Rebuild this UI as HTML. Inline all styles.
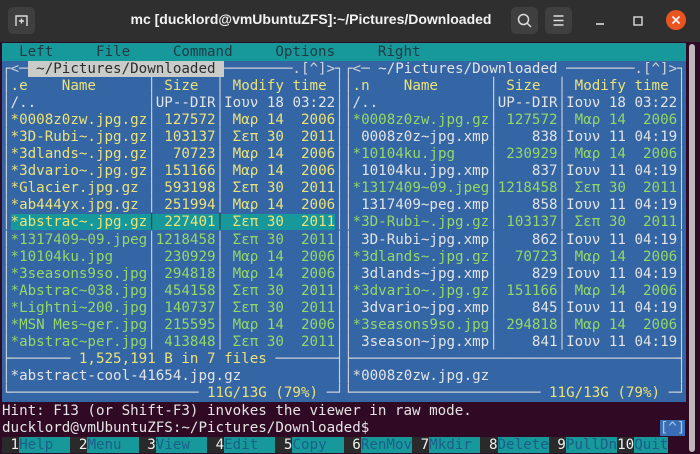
<!DOCTYPE html>
<html><head><meta charset="utf-8"><style>
*{margin:0;padding:0;box-sizing:border-box}
body{width:700px;height:454px;overflow:hidden;background:#300a24;position:relative;font-family:"DejaVu Sans Mono",monospace}
#tb{position:absolute;left:0;top:0;width:700px;height:42px;background:#2f2f2f}
#title{position:absolute;left:0;width:622px;text-align:center;top:11px;color:#f2f2f2;font:bold 14px "Liberation Sans",sans-serif}
.btn{position:absolute;top:7px;width:27px;height:27px;background:#3f3f3f;border-radius:5px}
.ln{height:17.1px;line-height:17.1px;white-space:pre;font-size:14.2px;font-family:"DejaVu Sans Mono",monospace}
#menu{position:absolute;left:2px;top:42.5px;width:684px;height:18.1px;padding-top:1px;background:#17989a;color:#1f3c44}
.pn{position:absolute;top:60.6px;width:342px;background:#3465a4;color:#d0d4d8}
#lp{left:2px}#rp{left:344px}
.y{color:#ece27a}.g{color:#94d868}.w{color:#e2e4e6}
.sel{background:#17989a}
.hl{background:#c9ccc8;color:#2a2e30}
#bot{position:absolute;left:2px;top:402.6px;width:684px;color:#e4e4e4}
.t{background:#17989a;color:#1b5f8a}
.n{color:#f0f0f0;background:#2a2a2a}
.up{background:#3a6eb4;color:#a8c8ec}
#sb{position:absolute;left:689px;top:44px;width:6px;height:408px;background:#bdb8bb;border-radius:3px}
</style></head><body>
<div id="tb">
<div class="btn" style="left:8px"><svg width="27" height="27" viewBox="0 0 27 27"><path d="M8 19V9h11v10" fill="none" stroke="#ddd" stroke-width="1.4"/><path d="M13.5 11.5v5M11 14h5" stroke="#ddd" stroke-width="1.4"/></svg></div>
<div id="title">mc [ducklord@vmUbuntuZFS]:~/Pictures/Downloaded</div>
<div class="btn" style="left:511px"><svg width="27" height="27" viewBox="0 0 27 27"><circle cx="12.5" cy="12.5" r="5" fill="none" stroke="#ddd" stroke-width="1.5"/><path d="M16 16l4 4" stroke="#ddd" stroke-width="1.5"/></svg></div>
<div class="btn" style="left:545px"><svg width="27" height="27" viewBox="0 0 27 27"><path d="M8.5 9h10M8.5 13.5h10M8.5 18h10" stroke="#ddd" stroke-width="1.4"/></svg></div>
<svg style="position:absolute;left:590px;top:8px" width="100" height="26" viewBox="0 0 100 26"><path d="M6 16h8" stroke="#ddd" stroke-width="1.6"/><rect x="44" y="9" width="8" height="8" fill="none" stroke="#ddd" stroke-width="1.4"/><circle cx="86" cy="12" r="10" fill="#e95420"/><path d="M82.5 8.5l7 7M89.5 8.5l-7 7" stroke="#fff" stroke-width="1.6"/></svg>
</div>
<div id="sb"></div>
<div id="menu" class="ln">  Left     File     Command     Options     Right</div>
<div id="lp" class="pn">
<div class="ln">┌&lt;─<span class="hl"> ~/Pictures/Downloaded </span>────────.[^]&gt;┐</div>
<div class="ln">│<span class="y">.e    Name      </span>│<span class="y"> Size  </span>│<span class="y"> Modify time </span>│</div>
<div class="ln">│<span class="w">/..             </span>│<span class="w">UP--DIR</span>│<span class="w">Ιουν 18 03:22</span>│</div>
<div class="ln">│<span class="y">*0008z0zw.jpg.gz</span>│<span class="y"> 127572</span>│<span class="y"> Μαρ 14  2006</span>│</div>
<div class="ln">│<span class="y">*3D-Rubi~.jpg.gz</span>│<span class="y"> 103137</span>│<span class="y"> Σεπ 30  2011</span>│</div>
<div class="ln">│<span class="y">*3dlands~.jpg.gz</span>│<span class="y">  70723</span>│<span class="y"> Μαρ 14  2006</span>│</div>
<div class="ln">│<span class="y">*3dvario~.jpg.gz</span>│<span class="y"> 151166</span>│<span class="y"> Μαρ 14  2006</span>│</div>
<div class="ln">│<span class="y">*Glacier.jpg.gz </span>│<span class="y"> 593198</span>│<span class="y"> Σεπ 30  2011</span>│</div>
<div class="ln">│<span class="y">*ab444yx.jpg.gz </span>│<span class="y"> 251994</span>│<span class="y"> Μαρ 14  2006</span>│</div>
<div class="ln">│<span class="sel"><span class="y">*abstrac~.jpg.gz</span><span style="color:#1f3c44">│</span><span class="y"> 227401</span><span style="color:#1f3c44">│</span><span class="y"> Σεπ 30  2011</span></span>│</div>
<div class="ln">│<span class="g">*1317409~09.jpeg</span>│<span class="g">1218458</span>│<span class="g"> Σεπ 30  2011</span>│</div>
<div class="ln">│<span class="g">*10104ku.jpg    </span>│<span class="g"> 230929</span>│<span class="g"> Μαρ 14  2006</span>│</div>
<div class="ln">│<span class="g">*3seasons9so.jpg</span>│<span class="g"> 294818</span>│<span class="g"> Μαρ 14  2006</span>│</div>
<div class="ln">│<span class="g">*Abstrac~038.jpg</span>│<span class="g"> 454158</span>│<span class="g"> Σεπ 30  2011</span>│</div>
<div class="ln">│<span class="g">*Lightni~200.jpg</span>│<span class="g"> 140737</span>│<span class="g"> Σεπ 30  2011</span>│</div>
<div class="ln">│<span class="g">*MSN Mes~ger.jpg</span>│<span class="g"> 215595</span>│<span class="g"> Μαρ 14  2006</span>│</div>
<div class="ln">│<span class="g">*abstrac~per.jpg</span>│<span class="g"> 413848</span>│<span class="g"> Σεπ 30  2011</span>│</div>
<div class="ln">├───────<span class="y"> 1,525,191 B in 7 files </span>───────┤</div>
<div class="ln">│<span class="w">*abstract-cool-41654.jpg.gz           </span>│</div>
<div class="ln">└──────────────────────<span class="y"> 11G/13G (79%) </span>─┘</div>
</div>
<div id="rp" class="pn">
<div class="ln">┌&lt;─<span class="w"> ~/Pictures/Downloaded </span>────────.[^]&gt;┐</div>
<div class="ln">│<span class="y">.n    Name      </span>│<span class="y"> Size  </span>│<span class="y"> Modify time </span>│</div>
<div class="ln">│<span class="w">/..             </span>│<span class="w">UP--DIR</span>│<span class="w">Ιουν 18 03:22</span>│</div>
<div class="ln">│<span class="g">*0008z0zw.jpg.gz</span>│<span class="g"> 127572</span>│<span class="g"> Μαρ 14  2006</span>│</div>
<div class="ln">│<span class="w"> 0008z0z~jpg.xmp</span>│<span class="w">    838</span>│<span class="w">Ιουν 11 04:19</span>│</div>
<div class="ln">│<span class="g">*10104ku.jpg    </span>│<span class="g"> 230929</span>│<span class="g"> Μαρ 14  2006</span>│</div>
<div class="ln">│<span class="w"> 10104ku.jpg.xmp</span>│<span class="w">    837</span>│<span class="w">Ιουν 11 04:19</span>│</div>
<div class="ln">│<span class="g">*1317409~09.jpeg</span>│<span class="g">1218458</span>│<span class="g"> Σεπ 30  2011</span>│</div>
<div class="ln">│<span class="w"> 1317409~peg.xmp</span>│<span class="w">    858</span>│<span class="w">Ιουν 11 04:19</span>│</div>
<div class="ln">│<span class="g">*3D-Rubi~.jpg.gz</span>│<span class="g"> 103137</span>│<span class="g"> Σεπ 30  2011</span>│</div>
<div class="ln">│<span class="w"> 3D-Rubi~jpg.xmp</span>│<span class="w">    862</span>│<span class="w">Ιουν 11 04:19</span>│</div>
<div class="ln">│<span class="g">*3dlands~.jpg.gz</span>│<span class="g">  70723</span>│<span class="g"> Μαρ 14  2006</span>│</div>
<div class="ln">│<span class="w"> 3dlands~jpg.xmp</span>│<span class="w">    829</span>│<span class="w">Ιουν 11 04:19</span>│</div>
<div class="ln">│<span class="g">*3dvario~.jpg.gz</span>│<span class="g"> 151166</span>│<span class="g"> Μαρ 14  2006</span>│</div>
<div class="ln">│<span class="w"> 3dvario~jpg.xmp</span>│<span class="w">    845</span>│<span class="w">Ιουν 11 04:19</span>│</div>
<div class="ln">│<span class="g">*3seasons9so.jpg</span>│<span class="g"> 294818</span>│<span class="g"> Μαρ 14  2006</span>│</div>
<div class="ln">│<span class="w"> 3season~jpg.xmp</span>│<span class="w">    841</span>│<span class="w">Ιουν 11 04:19</span>│</div>
<div class="ln">├──────────────────────────────────────┤</div>
<div class="ln">│<span class="w">*0008z0zw.jpg.gz                      </span>│</div>
<div class="ln">└──────────────────────<span class="y"> 11G/13G (79%) </span>─┘</div>
</div>
<div id="bot">
<div class="ln">Hint: F13 (or Shift-F3) invokes the viewer in raw mode.</div>
<div class="ln">ducklord@vmUbuntuZFS:~/Pictures/Downloaded$                                  <span class="up">[^]</span></div>
<div class="ln"><span class="n"> 1</span><span class="t">Help  </span><span class="n"> 2</span><span class="t">Menu  </span><span class="n"> 3</span><span class="t">View  </span><span class="n"> 4</span><span class="t">Edit  </span><span class="n"> 5</span><span class="t">Copy  </span><span class="n"> 6</span><span class="t">RenMov</span><span class="n"> 7</span><span class="t">Mkdir </span><span class="n"> 8</span><span class="t">Delete</span><span class="n"> 9</span><span class="t">PullDn</span><span class="n">10</span><span class="t">Quit</span></div>
</div>
</body></html>
